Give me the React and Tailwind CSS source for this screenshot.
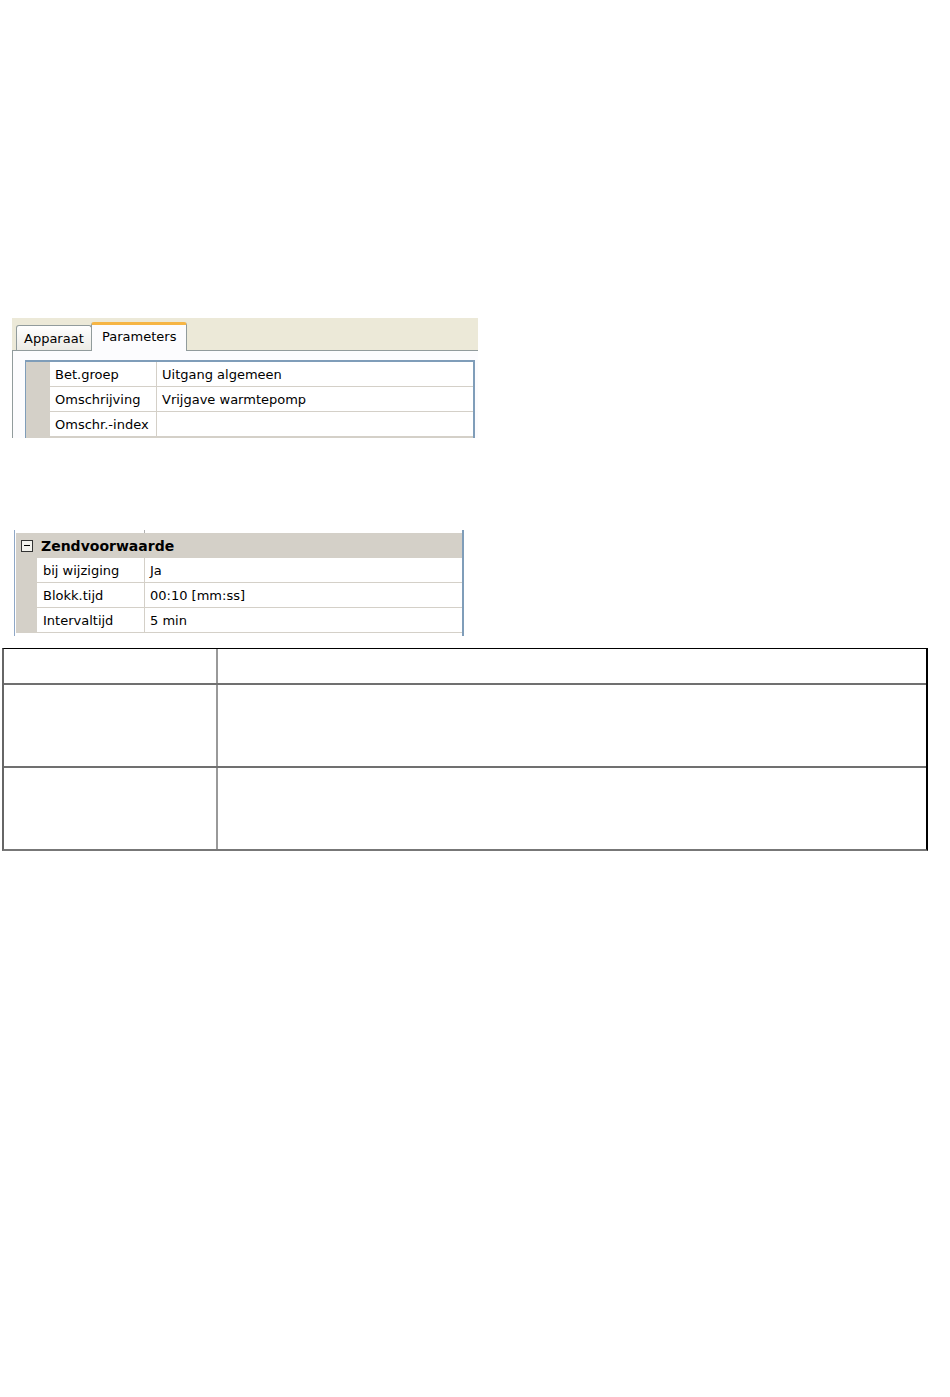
import React from 'react';

function ParamRow({ label, value }) {
  return (
    <div className="flex h-[25px]">
      <div className="w-[24px] bg-[#d4d0c8]" />
      <div className="w-[107px] border-r border-b border-[#d4d0c8] pl-[5px] pt-[2px] flex items-center whitespace-nowrap">{label}</div>
      <div className="flex-1 border-b border-[#d4d0c8] pl-[5px] pt-[2px] flex items-center whitespace-nowrap">{value}</div>
    </div>
  );
}

function SendRow({ label, value }) {
  return (
    <div className="flex h-[25px] ml-px">
      <div className="w-[21px] bg-[#d4d0c8]" />
      <div className="w-[108px] border-r border-b border-[#d4d0c8] pl-[6px] pt-[2px] flex items-center whitespace-nowrap">{label}</div>
      <div className="flex-1 border-b border-[#d4d0c8] pl-[5px] pt-[2px] flex items-center whitespace-nowrap">{value}</div>
    </div>
  );
}

export default function App() {
  return (
    <div className="w-[950px] h-[1397px] bg-white pt-[318px] font-['DejaVu_Sans',sans-serif] text-[13px] text-black">
      {/* Parameters tab panel */}
      <div className="ml-[12px] w-[466px] h-[120px] overflow-hidden flex flex-col">
        <div className="h-[33px] shrink-0 bg-[#ece9d8] border-b border-[#919b9c] flex items-end pl-[4px]">
          <div className="w-[76px] h-[25px] border border-b-0 border-[#919b9c] rounded-t-[3px] bg-gradient-to-b from-white to-[#ecebe5] pl-[7px] pt-[2px] flex items-center">
            Apparaat
          </div>
          <div className="w-[96px] h-[29px] -mb-px -ml-px bg-[#fcfcfe] border-x border-[#919b9c] border-t-[3px] border-t-[#f6b545] rounded-t-[3px] pl-[10px] pb-[3px] flex items-center">
            Parameters
          </div>
        </div>
        <div className="flex-1 bg-[#fcfcfe] border-l border-[#919b9c] pl-[12px] pt-[9px]">
          <div className="w-[450px] border-l border-t-2 border-r-2 border-[#7f9db9] bg-white">
            <ParamRow label="Bet.groep" value="Uitgang algemeen" />
            <ParamRow label="Omschrijving" value="Vrijgave warmtepomp" />
            <ParamRow label="Omschr.-index" value="" />
            <div className="h-[25px] bg-[#d4d0c8]" />
          </div>
        </div>
      </div>

      {/* Zendvoorwaarde panel */}
      <div className="mt-[92px] ml-[14px] w-[450px] h-[106px] border-l border-[#8fa7c6] border-r-2 border-r-[#7f9db9] bg-white">
        <div className="h-[3px] flex">
          <div className="w-[130px] border-r border-[#b0b0b0]" />
        </div>
        <div className="h-[25px] ml-px bg-[#d4d0c8] flex items-center">
          <div className="ml-[5px] w-[12px] h-[12px] border border-[#333] bg-[#f4f3ee] flex items-center justify-center">
            <div className="w-[6px] h-px bg-black" />
          </div>
          <span className="ml-[8px] pt-[2px] font-bold text-[14px]">Zendvoorwaarde</span>
        </div>
        <SendRow label="bij wijziging" value="Ja" />
        <SendRow label="Blokk.tijd" value="00:10 [mm:ss]" />
        <SendRow label="Intervaltijd" value="5 min" />
      </div>

      {/* Empty table */}
      <div className="mt-[12px] ml-[2px] w-[926px] border-t border-t-black border-l-2 border-l-[#666] border-r-2 border-r-black border-b-2 border-b-[#777]">
        <div className="flex h-[36px] border-b-2 border-[#707070]">
          <div className="w-[214px] border-r-2 border-[#999]" />
          <div className="flex-1" />
        </div>
        <div className="flex h-[83px] border-b-2 border-[#707070]">
          <div className="w-[214px] border-r-2 border-[#999]" />
          <div className="flex-1" />
        </div>
        <div className="flex h-[81px]">
          <div className="w-[214px] border-r-2 border-[#999]" />
          <div className="flex-1" />
        </div>
      </div>
    </div>
  );
}
